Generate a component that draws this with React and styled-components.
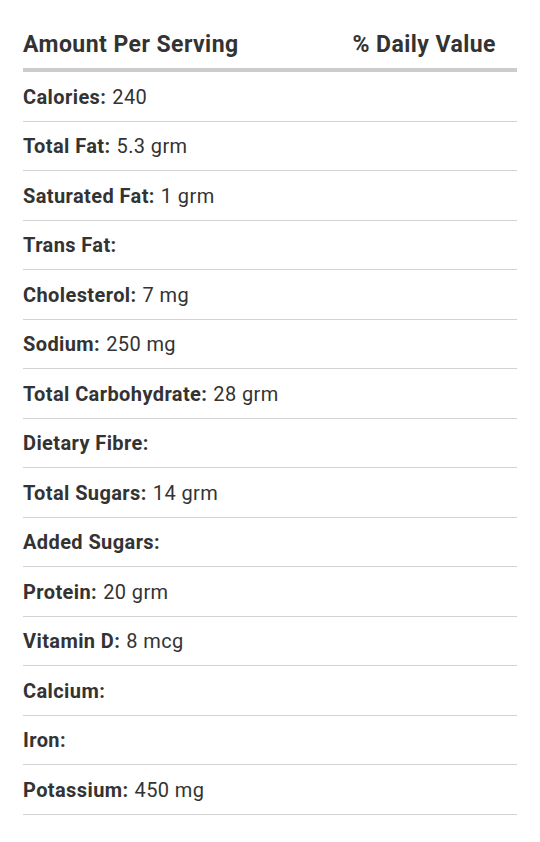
import React from 'react';
import styled, { createGlobalStyle } from 'styled-components';

const GlobalStyle = createGlobalStyle`
  body {
    margin: 0;
    background: #ffffff;
    font-family: Roboto, "Liberation Sans", sans-serif;
    color: #333333;
  }
`;

const Panel = styled.div`
  padding: 31px 23px 0;
`;

const Header = styled.div`
  display: flex;
  justify-content: space-between;
  padding: 1px 21px 10px 0;
  border-bottom: 4px solid #cccccc;
  font-size: 23px;
  line-height: 26px;
  letter-spacing: 0.45px;
  font-weight: 700;
`;

const Row = styled.div`
  display: flex;
  align-items: center;
  box-sizing: border-box;
  height: 49.5px;
  padding-top: 1px;
  border-bottom: 1px solid #d2d2d2;
  font-size: 20px;
  letter-spacing: 0.4px;
`;

const Label = styled.strong`
  font-weight: 700;
  margin-right: 6px;
`;

const nutrients = [
  ['Calories', '240'],
  ['Total Fat', '5.3 grm'],
  ['Saturated Fat', '1 grm'],
  ['Trans Fat', ''],
  ['Cholesterol', '7 mg'],
  ['Sodium', '250 mg'],
  ['Total Carbohydrate', '28 grm'],
  ['Dietary Fibre', ''],
  ['Total Sugars', '14 grm'],
  ['Added Sugars', ''],
  ['Protein', '20 grm'],
  ['Vitamin D', '8 mcg'],
  ['Calcium', ''],
  ['Iron', ''],
  ['Potassium', '450 mg'],
];

export default function App() {
  return (
    <>
      <GlobalStyle />
      <Panel>
        <Header>
          <span>Amount Per Serving</span>
          <span>% Daily Value</span>
        </Header>
        {nutrients.map(([name, value]) => (
          <Row key={name}>
            <Label>{name}:</Label>
            {value}
          </Row>
        ))}
      </Panel>
    </>
  );
}
